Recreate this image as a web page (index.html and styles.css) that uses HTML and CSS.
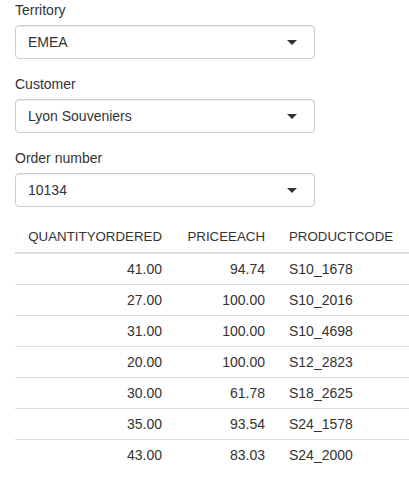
FILE: index.html
```html
<!DOCTYPE html>
<html lang="en">
<head>
<meta charset="utf-8">
<title>Orders</title>
<link rel="stylesheet" href="styles.css">
</head>
<body>
<div class="container">
  <div class="form-group">
    <label class="control-label">Territory</label>
    <div class="select-box"><span class="select-value">EMEA</span><span class="caret"></span></div>
  </div>
  <div class="form-group">
    <label class="control-label">Customer</label>
    <div class="select-box"><span class="select-value">Lyon Souveniers</span><span class="caret"></span></div>
  </div>
  <div class="form-group">
    <label class="control-label">Order number</label>
    <div class="select-box"><span class="select-value">10134</span><span class="caret"></span></div>
  </div>
  <table class="data-table">
    <colgroup>
      <col class="col-qty">
      <col class="col-price">
      <col class="col-code">
    </colgroup>
    <thead>
      <tr>
        <th class="num">QUANTITYORDERED</th>
        <th class="num">PRICEEACH</th>
        <th>PRODUCTCODE</th>
      </tr>
    </thead>
    <tbody>
      <tr><td class="num">41.00</td><td class="num">94.74</td><td>S10_1678</td></tr>
      <tr><td class="num">27.00</td><td class="num">100.00</td><td>S10_2016</td></tr>
      <tr><td class="num">31.00</td><td class="num">100.00</td><td>S10_4698</td></tr>
      <tr><td class="num">20.00</td><td class="num">100.00</td><td>S12_2823</td></tr>
      <tr><td class="num">30.00</td><td class="num">61.78</td><td>S18_2625</td></tr>
      <tr><td class="num">35.00</td><td class="num">93.54</td><td>S24_1578</td></tr>
      <tr><td class="num">43.00</td><td class="num">83.03</td><td>S24_2000</td></tr>
    </tbody>
  </table>
</div>
</body>
</html>
```

FILE: styles.css
```css
html, body {
  margin: 0;
  padding: 0;
  background: #fff;
}

body {
  font-family: "Liberation Sans", Arial, Helvetica, sans-serif;
  font-size: 14px;
  line-height: 20px;
  color: #333;
}

.container {
  padding: 0 0 0 15px;
}

.form-group {
  margin-bottom: 15px;
  width: 300px;
}

.control-label {
  display: block;
  margin-bottom: 5px;
  font-weight: normal;
}

.select-box {
  position: relative;
  box-sizing: border-box;
  height: 34px;
  padding: 6px 12px;
  border: 1px solid #ccc;
  border-radius: 4px;
  background: #fff;
  box-shadow: inset 0 1px 1px rgba(0, 0, 0, 0.075);
}

.select-value {
  display: block;
  line-height: 20px;
}

/* dropdown caret */
.caret {
  position: absolute;
  right: 17px;
  top: 50%;
  margin-top: -2px;
  width: 0;
  height: 0;
  border-style: solid;
  border-width: 5px 5px 0 5px;
  border-color: #333 transparent transparent transparent;
}

.data-table {
  border-collapse: collapse;
  table-layout: fixed;
  width: 394px;
}

.col-qty { width: 159px; }
.col-price { width: 103px; }
.col-code { width: 132px; }

.data-table th,
.data-table td {
  padding: 0 12px;
  text-align: left;
  white-space: nowrap;
}

.data-table th {
  height: 30px;
  font-size: 13.3px;
  font-weight: normal;
  border-bottom: 2px solid #ddd;
}

.data-table td {
  height: 30px;
  border-bottom: 1px solid #ddd;
}

.data-table tbody tr:last-child td {
  border-bottom: none;
}

.data-table .num {
  text-align: right;
}
```
